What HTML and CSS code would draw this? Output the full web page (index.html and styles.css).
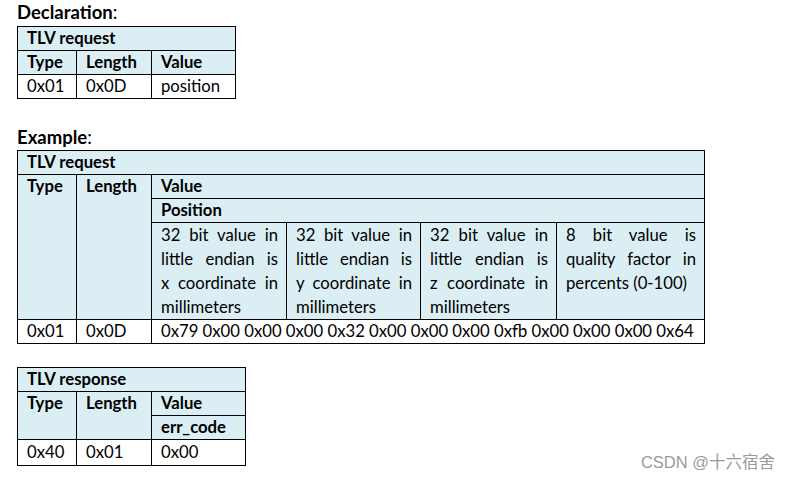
FILE: index.html
```html
<!DOCTYPE html>
<html>
<head>
<meta charset="utf-8">
<link rel="stylesheet" href="styles.css">
</head>
<body>
<div class="page">
  <h2 class="title">Declaration<span class="colon">:</span></h2>
  <table class="tlv t1">
    <colgroup><col class="c-type"><col class="c-len"><col class="c-val1"></colgroup>
    <tr class="hd"><th colspan="3">TLV request</th></tr>
    <tr class="hd"><th>Type</th><th>Length</th><th>Value</th></tr>
    <tr><td>0x01</td><td>0x0D</td><td>position</td></tr>
  </table>

  <h2 class="title ex">Example<span class="colon">:</span></h2>
  <table class="tlv t2">
    <colgroup><col class="c-type"><col class="c-len"><col class="c-a"><col class="c-b"><col class="c-c"><col class="c-d"></colgroup>
    <tr class="hd"><th colspan="6">TLV request</th></tr>
    <tr class="hd"><th rowspan="3" class="top">Type</th><th rowspan="3" class="top">Length</th><th colspan="4">Value</th></tr>
    <tr class="hd"><th colspan="4">Position</th></tr>
    <tr class="hd desc">
      <td><span class="j">32 bit value in</span><span class="j">little endian is</span><span class="j">x coordinate in</span><span>millimeters</span></td>
      <td><span class="j">32 bit value in</span><span class="j">little endian is</span><span class="j">y coordinate in</span><span>millimeters</span></td>
      <td><span class="j">32 bit value in</span><span class="j">little endian is</span><span class="j">z coordinate in</span><span>millimeters</span></td>
      <td><span class="j">8 bit value is</span><span class="j">quality factor in</span><span>percents (0-100)</span></td>
    </tr>
    <tr><td>0x01</td><td>0x0D</td><td colspan="4">0x79 0x00 0x00 0x00 0x32 0x00 0x00 0x00 0xfb 0x00 0x00 0x00 0x64</td></tr>
  </table>

  <table class="tlv t3">
    <colgroup><col class="c-type"><col class="c-len"><col class="c-val3"></colgroup>
    <tr class="hd"><th colspan="3">TLV response</th></tr>
    <tr class="hd"><th rowspan="2" class="top">Type</th><th rowspan="2" class="top">Length</th><th>Value</th></tr>
    <tr class="hd"><th>err_code</th></tr>
    <tr class="last"><td>0x40</td><td>0x01</td><td>0x00</td></tr>
  </table>
</div>
<div class="wm">CSDN @十六宿舍</div>
</body>
</html>
```
FILE: styles.css
```css
html, body { margin: 0; padding: 0; background: #fff; }
body {
  font-family: Lato, "Open Sans", "Noto Sans", sans-serif;
  color: #000;
  width: 791px;
  height: 481px;
  overflow: hidden;
  position: relative;
}
.page { padding: 1px 0 0 17px; }
.title {
  margin: 0;
  font-size: 18.5px;
  font-weight: 700;
  line-height: 22px;
  height: 25px;
}
.title .colon { font-weight: 400; }
.title.ex { margin-top: 27px; height: 24px; }
.tlv {
  border-collapse: collapse;
  table-layout: fixed;
  font-size: 16.7px;
}
.tlv th, .tlv td {
  border: 1px solid #000;
  padding: 0 8px 0 9px;
  height: 23px;
  line-height: 23px;
  text-align: left;
  vertical-align: top;
  white-space: nowrap;
  overflow: hidden;
}
.tlv th { font-weight: 700; }
.hd th, .hd td { background: #daeef3; }
.c-type { width: 59px; }
.c-len { width: 75px; }
.c-val1 { width: 84px; }
.t1 { width: 218px; }
.t2 { width: 687px; }
.c-a { width: 135px; }
.c-b { width: 134px; }
.c-c { width: 136px; }
.c-d { width: 148px; }
.t3 { width: 228px; margin-top: 23px; }
.t3 .last td { height: 25px; line-height: 25px; }
.c-val3 { width: 94px; }
.desc td { white-space: normal; line-height: 24px; }
.desc span { display: block; }
.desc span.j { text-align: justify; text-align-last: justify; }
.wm {
  position: absolute;
  right: 16px;
  bottom: 8px;
  font-family: "Liberation Sans", "Noto Sans CJK SC", sans-serif;
  font-size: 16.5px;
  color: #9a9a9a;
}
```
